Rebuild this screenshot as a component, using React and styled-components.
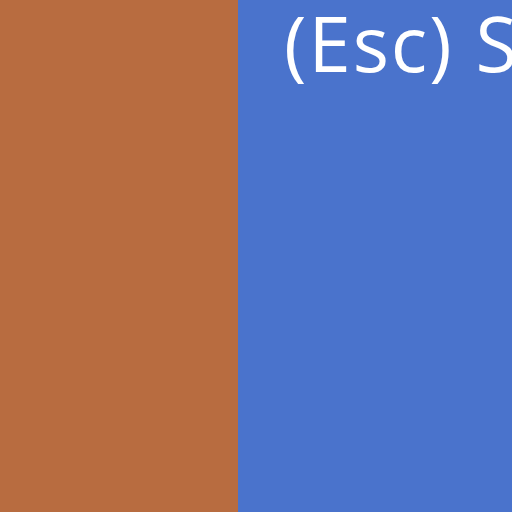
import React from "react";
import styled, { createGlobalStyle } from "styled-components";

const GlobalStyle = createGlobalStyle`
  html, body {
    margin: 0;
    padding: 0;
    overflow: hidden;
  }
  #root {
    width: 512px;
    height: 512px;
  }
`;

const Screen = styled.div`
  display: grid;
  grid-template-columns: 238px 1fr;
  width: 512px;
  height: 512px;
  overflow: hidden;
`;

const SidePanel = styled.div`
  background: #b86c40;
`;

const MainPanel = styled.div`
  background: #4a73cc;
  padding: 0 0 0 46px;
  overflow: hidden;
`;

const Title = styled.div`
  font-family: "Open Sans", "Noto Sans", sans-serif;
  font-size: 76px;
  line-height: 102px;
  letter-spacing: 2px;
  margin-top: -8px;
  color: #ffffff;
  white-space: nowrap;
`;

export default function App() {
  return (
    <>
      <GlobalStyle />
      <Screen>
        <SidePanel />
        <MainPanel>
          <Title>(Esc) Settings</Title>
        </MainPanel>
      </Screen>
    </>
  );
}
